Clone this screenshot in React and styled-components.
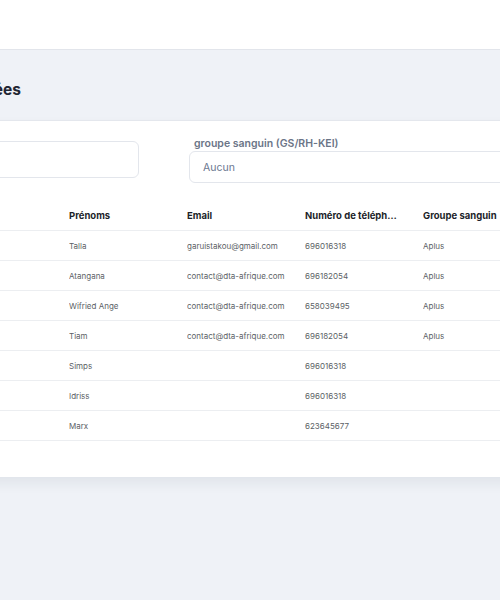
import React from "react";
import styled, { createGlobalStyle } from "styled-components";

const GlobalStyle = createGlobalStyle`
  html, body {
    margin: 0;
    padding: 0;
    background: #eff2f7;
    overflow: hidden;
    font-family: Inter, "Liberation Sans", sans-serif;
  }
  #root {
    min-height: 100vh;
  }
`;

// barre du haut
const TopBar = styled.header`
  height: 49px;
  background: #ffffff;
  border-bottom: 1px solid #e2e5eb;
`;

// le contenu est décalé : la page est plus large que la fenêtre
const Main = styled.main`
  width: 1000px;
  margin-left: -240px;
`;

const TitleBar = styled.div`
  height: 71px;
  display: flex;
  align-items: center;
  border-bottom: 1px solid #e6e9ef;
  box-sizing: border-box;
  padding-top: 8px;
`;

const Title = styled.h1`
  margin: 0;
  width: 261px;
  text-align: right;
  white-space: nowrap;
  font-size: 15.5px;
  font-weight: 700;
  color: #1f2633;
`;

const Card = styled.section`
  margin: 0 24px;
  background: #ffffff;
  padding: 17px 24px 36px;
  box-shadow: 0 6px 12px rgba(30, 40, 60, 0.07);
`;

const Filters = styled.div`
  display: flex;
  align-items: flex-start;
  gap: 50px;
`;

const Field = styled.div`
  display: flex;
  flex-direction: column;
  width: ${(p) => p.$width || "auto"};
  flex: ${(p) => (p.$grow ? 1 : "none")};
  margin-top: ${(p) => p.$top || 0}px;
`;

const Label = styled.label`
  font-size: 10.5px;
  font-weight: 600;
  color: #6b7587;
  line-height: 12px;
  margin-bottom: 1px;
  padding-left: 5px;
`;

const Input = styled.div`
  height: ${(p) => p.$h}px;
  box-sizing: border-box;
  border: 1px solid #e3e6ec;
  border-radius: 6px;
  background: #fff;
  display: flex;
  align-items: center;
  padding-left: 13px;
  font-size: 10.5px;
  color: #6b7790;
`;

const Table = styled.div`
  margin-top: 17px;
`;

const Row = styled.div`
  display: grid;
  grid-template-columns: 143px repeat(5, 118px);
  height: ${(p) => (p.$head ? 31 : 30)}px;
  align-items: center;
  border-bottom: 1px solid #eceef1;
  box-sizing: border-box;
`;

const HeadCell = styled.div`
  font-size: 9.5px;
  font-weight: 700;
  color: #1c1f2a;
  white-space: nowrap;
  overflow: hidden;
  text-overflow: ellipsis;
  padding-right: 26px;
`;

const Cell = styled.div`
  font-size: 8px;
  color: #5c5f66;
  white-space: nowrap;
  overflow: hidden;
`;

const rows = [
  ["Kouam", "Talla", "garuistakou@gmail.com", "696016318", "Aplus"],
  ["Mballa", "Atangana", "contact@dta-afrique.com", "696182054", "Aplus"],
  ["Ngono", "Wifried Ange", "contact@dta-afrique.com", "658039495", "Aplus"],
  ["Njoya", "Tiam", "contact@dta-afrique.com", "696182054", "Aplus"],
  ["Homer", "Simps", "", "696016318", ""],
  ["Deby", "Idriss", "", "696016318", ""],
  ["Karl", "Marx", "", "623645677", ""],
];

export default function App() {
  return (
    <>
      <GlobalStyle />
      <TopBar />
      <Main>
        <TitleBar>
          <Title>Liste des employées</Title>
        </TitleBar>
        <Card>
          <Filters>
            <Field $width="331px" $top={3}>
              <Input $h={37} />
            </Field>
            <Field $grow>
              <Label>groupe sanguin (GS/RH-KEI)</Label>
              <Input $h={32}>Aucun</Input>
            </Field>
          </Filters>
          <Table>
            <Row $head>
              <HeadCell>#</HeadCell>
              <HeadCell>Nom</HeadCell>
              <HeadCell>Prénoms</HeadCell>
              <HeadCell>Email</HeadCell>
              <HeadCell>Numéro de téléphone</HeadCell>
              <HeadCell>Groupe sanguin</HeadCell>
            </Row>
            {rows.map((r, i) => (
              <Row key={i}>
                <Cell>{i + 1}</Cell>
                {r.map((v, j) => (
                  <Cell key={j}>{v}</Cell>
                ))}
              </Row>
            ))}
          </Table>
        </Card>
      </Main>
    </>
  );
}
